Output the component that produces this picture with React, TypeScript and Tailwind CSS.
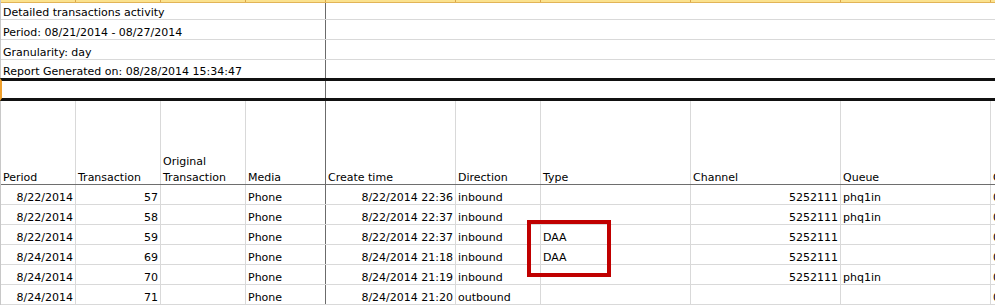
import React from "react";

const W = [75, 85, 85, 80, 130, 85, 150, 150, 150, 200];
const WCLS = [
  "w-[75px]",
  "w-[85px]",
  "w-[85px]",
  "w-[80px]",
  "w-[130px]",
  "w-[85px]",
  "w-[150px]",
  "w-[150px]",
  "w-[150px]",
  "w-[200px]",
];

type Cell = { t?: string; r?: boolean };

const rows: Cell[][] = [
  [{ t: "8/22/2014", r: true }, { t: "57", r: true }, {}, { t: "Phone" }, { t: "8/22/2014 22:36", r: true }, { t: "inbound" }, {}, { t: "5252111", r: true }, { t: "phq1in" }, { t: "0" }],
  [{ t: "8/22/2014", r: true }, { t: "58", r: true }, {}, { t: "Phone" }, { t: "8/22/2014 22:37", r: true }, { t: "inbound" }, {}, { t: "5252111", r: true }, { t: "phq1in" }, { t: "0" }],
  [{ t: "8/22/2014", r: true }, { t: "59", r: true }, {}, { t: "Phone" }, { t: "8/22/2014 22:37", r: true }, { t: "inbound" }, { t: "DAA" }, { t: "5252111", r: true }, {}, { t: "0" }],
  [{ t: "8/24/2014", r: true }, { t: "69", r: true }, {}, { t: "Phone" }, { t: "8/24/2014 21:18", r: true }, { t: "inbound" }, { t: "DAA" }, { t: "5252111", r: true }, {}, { t: "0" }],
  [{ t: "8/24/2014", r: true }, { t: "70", r: true }, {}, { t: "Phone" }, { t: "8/24/2014 21:19", r: true }, { t: "inbound" }, {}, { t: "5252111", r: true }, { t: "phq1in" }, { t: "0" }],
  [{ t: "8/24/2014", r: true }, { t: "71", r: true }, {}, { t: "Phone" }, { t: "8/24/2014 21:20", r: true }, { t: "outbound" }, {}, {}, {}, { t: "0" }],
];

function borderFor(i: number) {
  return i === 3 ? "border-r border-[#6b6b6b]" : "border-r border-[#d9d9d9]";
}

function TopRow({ text, h, last }: { text: string; h: string; last?: boolean }) {
  return (
    <div className={`flex ${h} ${last ? "" : "border-b border-[#d9d9d9]"}`}>
      <div className="w-[325px] shrink-0 border-r border-[#6b6b6b] flex items-end px-[2px] whitespace-nowrap">
        {text}
      </div>
      <div className="flex-1" />
    </div>
  );
}

export default function App() {
  return (
    <div
      className="relative w-[995px] h-[305px] overflow-hidden bg-white text-black text-[11px] leading-[13px]"
      style={{ fontFamily: '"DejaVu Sans", Verdana, sans-serif' }}
    >
      <div className="border-l border-[#c8c8c8] w-[1200px]">
        {/* column header strip */}
        <div className="flex h-[3px] bg-[#fbe28e] border-b border-[#e2b457]">
          {W.map((_, i) => (
            <div key={i} className={`${WCLS[i]} shrink-0 border-r border-[#dca648]`} />
          ))}
        </div>
        <TopRow text="Detailed transactions activity" h="h-[17px]" />
        <TopRow text="Period: 08/21/2014 - 08/27/2014" h="h-[20px]" />
        <TopRow text="Granularity: day" h="h-[20px]" />
        <TopRow text="Report Generated on: 08/28/2014 15:34:47" h="h-[18px]" last />
      </div>
      {/* selected row with thick borders */}
      <div className="flex h-[23px] w-[1200px] border-y-[3px] border-[#111111] border-l-2 border-l-[#f0a02c]">
        <div className="w-[324px] shrink-0 border-r border-[#6b6b6b]" />
        <div className="flex-1" />
      </div>
      <div className="border-l border-[#c8c8c8] w-[1200px]">
        {/* header row */}
        <div className="flex h-[84px] border-b border-[#6e6e6e]">
          {[
            "Period",
            "Transaction",
            "",
            "Media",
            "Create time",
            "Direction",
            "Type",
            "Channel",
            "Queue",
            "C",
          ].map((t, i) => (
            <div
              key={i}
              className={`${WCLS[i]} shrink-0 ${borderFor(i)} flex flex-col justify-end px-[2px] whitespace-nowrap`}
            >
              {i === 2 ? (
                <>
                  <div className="mb-[3px]">Original</div>
                  <div>Transaction</div>
                </>
              ) : (
                <div>{t}</div>
              )}
            </div>
          ))}
        </div>
        {rows.map((row, ri) => (
          <div key={ri} className="flex h-[20px] border-b border-[#d9d9d9]">
            {row.map((c, i) => (
              <div
                key={i}
                className={`${WCLS[i]} shrink-0 ${borderFor(i)} flex items-end px-[2px] whitespace-nowrap ${
                  c.r ? "justify-end" : "justify-start"
                }`}
              >
                {c.t ?? ""}
              </div>
            ))}
          </div>
        ))}
      </div>
      {/* red highlight box */}
      <div className="absolute left-[527px] top-[220px] w-[84px] h-[57px] border-4 border-[#c00000]" />
    </div>
  );
}
